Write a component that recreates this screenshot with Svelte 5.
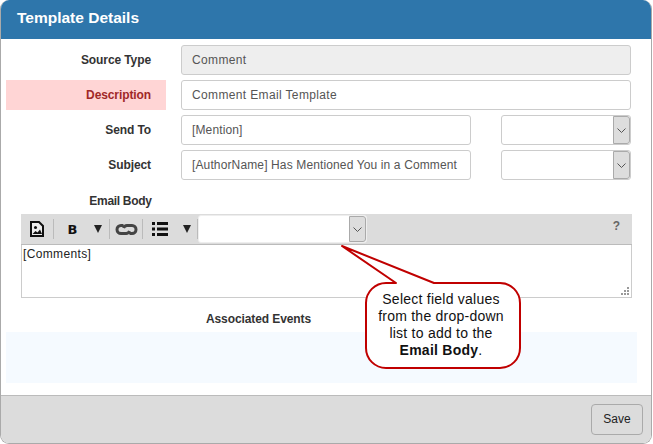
<script lang="ts">
const toolbarSeparator = "sep";
</script>

<div class="dialog">
	<header class="title">Template Details</header>

	<div class="body">
		<div class="row">
			<div class="label">Source Type</div>
			<div class="field wide disabled">Comment</div>
		</div>
		<div class="row">
			<div class="label error">Description</div>
			<div class="field wide">Comment Email Template</div>
		</div>
		<div class="row">
			<div class="label">Send To</div>
			<div class="field mid">[Mention]</div>
			<div class="select small">
				<span class="select-btn"><svg width="9" height="5" viewBox="0 0 9 5"><path d="M.5.5l4 4 4-4" fill="none" stroke="#555" /></svg></span>
			</div>
		</div>
		<div class="row">
			<div class="label">Subject</div>
			<div class="field mid">[AuthorName] Has Mentioned You in a Comment</div>
			<div class="select small">
				<span class="select-btn"><svg width="9" height="5" viewBox="0 0 9 5"><path d="M.5.5l4 4 4-4" fill="none" stroke="#555" /></svg></span>
			</div>
		</div>

		<div class="editor-label">Email Body</div>

		<div class="editor">
			<div class="toolbar">
				<span class="tool image-tool">
					<svg width="14" height="16" viewBox="0 0 14 16">
						<path d="M1 1h8l4 4v10H1z" fill="#eee" stroke="#111" stroke-width="2" />
						<circle cx="5.500" cy="6.500" r="1.500" fill="#111" />
						<path d="M2.500 13l3-3 2 1.500 2.500-3 2 4.500z" fill="#111" />
					</svg>
				</span>
				<span class={toolbarSeparator}></span>
				<span class="tool bold-tool">B</span>
				<span class="caret"></span>
				<span class={toolbarSeparator}></span>
				<span class="tool link-tool">
					<svg width="23" height="13" viewBox="0 0 23 13">
						<path d="M8.500 2.500H6a4 4 0 0 0 0 8h5a4 4 0 0 0 3.500-2.500M14.500 10.500H17a4 4 0 0 0 0-8h-5a4 4 0 0 0-3.500 2.500" fill="none" stroke="#444" stroke-width="3" />
					</svg>
				</span>
				<span class={toolbarSeparator}></span>
				<span class="tool list-tool">
					<svg width="16" height="14" viewBox="0 0 16 14">
						<path d="M0 0h3v3H0zM5 0h11v3H5zM0 5.500h3v3H0zM5 5.500h11v3H5zM0 11h3v3H0zM5 11h11v3H5z" fill="#111" />
					</svg>
				</span>
				<span class="caret list-caret"></span>
				<span class={toolbarSeparator}></span>
				<div class="select toolbar-select">
					<span class="select-btn"><svg width="9" height="5" viewBox="0 0 9 5"><path d="M.5.5l4 4 4-4" fill="none" stroke="#555" /></svg></span>
				</div>
				<span class="help">?</span>
			</div>
			<div class="editor-text">
				[Comments]
				<svg class="grip" width="9" height="9" viewBox="0 0 9 9">
					<path d="M7 1h2v2H7zM4 4h2v2H4zM7 4h2v2H7zM1 7h2v2H1zM4 7h2v2H4zM7 7h2v2H7z" fill="#999" />
				</svg>
			</div>
		</div>

		<div class="events-label">Associated Events</div>
		<div class="events"></div>
	</div>

	<footer class="footer">
		<button class="save" type="button">Save</button>
	</footer>

	<div class="callout">
		<svg class="callout-shape" width="184" height="126" viewBox="0 0 184 126">
			<path
				d="M56 40 L2 3 L94 40 H160 A20 20 0 0 1 180 60 V105 A20 20 0 0 1 160 125 H46 A20 20 0 0 1 26 105 V60 A20 20 0 0 1 46 40 Z"
				fill="#fff"
				stroke="#c00000"
				stroke-width="2"
				stroke-linejoin="round"
			/>
		</svg>
		<p class="callout-text">Select field values<br />from the drop-down<br />list to add to the<br /><b>Email Body</b>.</p>
	</div>
</div>

<style>
	:global(body) {
		margin: 0;
		background: #fff;
	}

	.dialog {
		position: relative;
		box-sizing: border-box;
		width: 652px;
		height: 444px;
		display: flex;
		flex-direction: column;
		border: 1px solid #aaa;
		border-top: 0;
		border-radius: 9px;
		overflow: hidden;
		background: #fff;
		font-family: "Liberation Sans", Arial, sans-serif;
		font-size: 12px;
		color: #333;
	}

	.title {
		height: 39px;
		flex: none;
		box-sizing: border-box;
		padding: 8px 0 0 16px;
		background: #2e76ab;
		color: #fff;
		font-size: 15.5px;
		font-weight: bold;
		line-height: 19px;
	}

	.body {
		flex: 1;
		padding: 6px 0 0 5px;
	}

	.row {
		display: flex;
		height: 30px;
		margin-bottom: 5px;
	}

	.label {
		box-sizing: border-box;
		width: 160px;
		margin-right: 15px;
		padding-right: 15px;
		text-align: right;
		font-weight: bold;
		line-height: 31px;
		letter-spacing: -0.1px;
	}

	.label.error {
		background: #ffd5d5;
		color: #a02828;
	}

	.field {
		box-sizing: border-box;
		height: 30px;
		padding: 0 10px;
		border: 1px solid #ccc;
		border-radius: 3px;
		background: #fff;
		color: #555;
		line-height: 28px;
		letter-spacing: 0.13px;
		white-space: nowrap;
	}

	.wide {
		width: 450px;
		letter-spacing: 0.36px;
	}

	.mid {
		width: 290px;
	}

	.disabled {
		background: #eee;
	}

	.select {
		position: relative;
		box-sizing: border-box;
		border: 1px solid #ccc;
		border-radius: 3px;
		background: #fff;
		display: flex;
		justify-content: flex-end;
	}

	.small {
		width: 130px;
		height: 30px;
		margin-left: 30px;
	}

	.select-btn {
		width: 17px;
		display: flex;
		align-items: center;
		justify-content: center;
		box-sizing: border-box;
		margin: 0;
		border: 1px solid #aaa;
		border-radius: 0 3px 3px 0;
		background: #ddd;
	}

	.editor-label {
		width: 229px;
		text-align: center;
		font-weight: bold;
		line-height: 14px;
		margin-top: 14px;
		letter-spacing: -0.3px;
	}

	.editor {
		width: 611px;
		margin: 6px 0 0 15px;
	}

	.toolbar {
		display: flex;
		align-items: center;
		height: 31px;
		box-sizing: border-box;
		border-bottom: 1px solid #bbb;
		background: #dcdcdc;
	}

	.tool {
		display: flex;
		align-items: center;
		justify-content: center;
	}

	.image-tool {
		width: 32px;
	}

	.bold-tool {
		width: 37px;
		font-size: 13px;
		font-weight: bold;
		color: #111;
		font-family: "DejaVu Sans", sans-serif;
	}

	.link-tool {
		width: 32px;
	}

	.list-tool {
		width: 34px;
	}

	.sep {
		width: 1px;
		height: 20px;
		background: #bbb;
	}

	.caret {
		width: 0;
		height: 0;
		margin: 0 7px 0 3px;
		border: 4px solid transparent;
		border-top: 8px solid #222;
		border-bottom: 0;
	}

	.list-caret {
		margin: 0 6px 0 6px;
	}

	.toolbar-select {
		width: 169px;
		height: 28px;
		border-color: #eee;
	}

	.help {
		margin: -6px 0 0 auto;
		padding-right: 12px;
		font-weight: bold;
		color: #666;
	}

	.editor-text {
		position: relative;
		box-sizing: border-box;
		height: 53px;
		padding: 2px 1px;
		border: 1px solid #ccc;
		border-top: 0;
		line-height: 15px;
		letter-spacing: 0.35px;
		color: #222;
	}

	.grip {
		position: absolute;
		right: 2px;
		bottom: 2px;
	}

	.events-label {
		width: 505px;
		text-align: center;
		font-weight: bold;
		line-height: 14px;
		margin-top: 14px;
		letter-spacing: -0.1px;
	}

	.events {
		width: 631px;
		height: 51px;
		margin-top: 6px;
		background: #f5faff;
	}

	.footer {
		flex: none;
		display: flex;
		justify-content: flex-end;
		height: 48px;
		box-sizing: border-box;
		padding: 8px 8px 0 0;
		border-top: 1px solid #bbb;
		background: #dcdcdc;
	}

	.save {
		box-sizing: border-box;
		width: 52px;
		height: 31px;
		padding: 0 0 1px;
		border: 1px solid #aaa;
		border-radius: 4px;
		background: #dcdcdc;
		color: #222;
		font-family: inherit;
		font-size: 12px;
	}

	/* annotation laid over the editor */
	.callout {
		position: absolute;
		left: 339px;
		top: 243px;
		width: 184px;
		height: 126px;
	}

	.callout-shape {
		display: block;
	}

	.callout-text {
		position: absolute;
		left: 28px;
		top: 48px;
		width: 146px;
		margin: 0;
		text-align: center;
		font-size: 14px;
		line-height: 17px;
		letter-spacing: 0.24px;
		color: #111;
	}

	.callout-text b {
		font-weight: bold;
	}
</style>
